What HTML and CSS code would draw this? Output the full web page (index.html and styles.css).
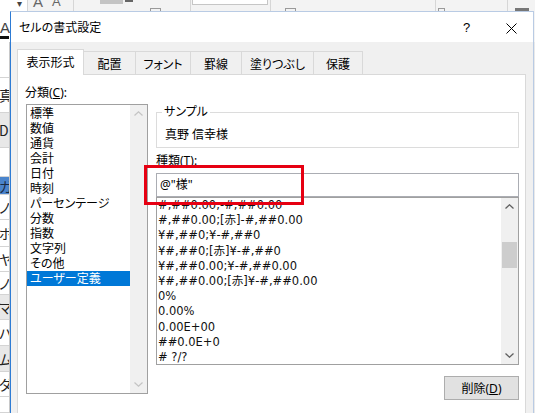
FILE: index.html
```html
<!DOCTYPE html>
<html lang="ja">
<head>
<meta charset="utf-8">
<title>セルの書式設定</title>
<link rel="stylesheet" href="styles.css">
</head>
<body>
<div class="screen">
  <div class="ribbon">
    <div class="rb rb-1">
      <div class="rb-drop">▾</div>
      <div class="rb-fontcolor"><span class="rb-a">A</span><span class="rb-bar"></span></div>
    </div>
    <div class="rb rb-2"><span class="rb-big">A</span><span class="rb-small">A</span></div>
    <div class="rb rb-3"><span class="blk-gray"></span><span class="blk-dark"></span><span class="mini-grid g1"></span></div>
    <div class="rb rb-4"><span class="white-box"></span><span class="mini-blue"></span></div>
    <div class="rb rb-5"><span class="mini-grid g2"></span></div>
    <div class="rb rb-6"><span class="mini-grid g3"></span></div>
    <div class="rb rb-7"><span class="blk-dark2"></span></div>
  </div>
  <div class="sheet">
    <div class="cell h36"></div>
    <div class="cell h35">真</div>
    <div class="cell h35 gray">D</div>
    <div class="cell h29"></div>
    <div class="cell h18 sel">ガ</div>
    <div class="cell h25">ノ</div>
    <div class="cell h27">ボ</div>
    <div class="cell h25">ヤ</div>
    <div class="cell h23">ノ</div>
    <div class="cell h25 gray">マ</div>
    <div class="cell h26">ハ</div>
    <div class="cell h26 gray">ム</div>
    <div class="cell h25">ダ</div>
    <div class="cell h16"></div>
  </div>
  <div class="rest"></div>

  <div class="dialog">
    <div class="titlebar">
      <span class="title">セルの書式設定</span>
      <span class="cap-btn help">?</span>
      <span class="cap-btn close">
        <svg width="11" height="11" viewBox="0 0 11 11"><path d="M0.5 0.5 L10.5 10.5 M10.5 0.5 L0.5 10.5" stroke="#000" stroke-width="1" fill="none"/></svg>
      </span>
    </div>
    <div class="body">
      <div class="tabs">
        <div class="tab active w1">表示形式</div>
        <div class="tab w2">配置</div>
        <div class="tab w3">フォント</div>
        <div class="tab w4">罫線</div>
        <div class="tab w5">塗りつぶし</div>
        <div class="tab w6">保護</div>
      </div>
      <div class="panel">
        <div class="col-left">
          <div class="label">分類(<u>C</u>):</div>
          <div class="listbox cat">
            <ul class="items">
              <li>標準</li>
              <li>数値</li>
              <li>通貨</li>
              <li>会計</li>
              <li>日付</li>
              <li>時刻</li>
              <li>パーセンテージ</li>
              <li>分数</li>
              <li>指数</li>
              <li>文字列</li>
              <li>その他</li>
              <li class="selected">ユーザー定義</li>
            </ul>
            <div class="vscroll disabled">
              <span class="arrow"><svg width="9" height="5" viewBox="0 0 9 5"><path d="M0.5 4.5 L4.5 0.8 L8.5 4.5" stroke="currentColor" stroke-width="1.2" fill="none"/></svg></span>
              <span class="track"></span>
              <span class="arrow"><svg width="9" height="5" viewBox="0 0 9 5"><path d="M0.5 0.5 L4.5 4.2 L8.5 0.5" stroke="currentColor" stroke-width="1.2" fill="none"/></svg></span>
            </div>
          </div>
        </div>
        <div class="col-right">
          <fieldset class="sample">
            <legend>サンプル</legend>
            <div class="sample-text">真野 信幸様</div>
          </fieldset>
          <div class="label type-label">種類(<u>T</u>):</div>
          <div class="input">@"様"</div>
          <div class="listbox fmt">
            <ul class="items">
              <li>#,##0.00;-#,##0.00</li>
              <li>#,##0.00;[赤]-#,##0.00</li>
              <li>¥#,##0;¥-#,##0</li>
              <li>¥#,##0;[赤]¥-#,##0</li>
              <li>¥#,##0.00;¥-#,##0.00</li>
              <li>¥#,##0.00;[赤]¥-#,##0.00</li>
              <li>0%</li>
              <li>0.00%</li>
              <li>0.00E+00</li>
              <li>##0.0E+0</li>
              <li># ?/?</li>
            </ul>
            <div class="vscroll">
              <span class="arrow"><svg width="9" height="5" viewBox="0 0 9 5"><path d="M0.5 4.5 L4.5 0.8 L8.5 4.5" stroke="currentColor" stroke-width="1.3" fill="none"/></svg></span>
              <span class="track"><span class="thumb"></span></span>
              <span class="arrow"><svg width="9" height="5" viewBox="0 0 9 5"><path d="M0.5 0.5 L4.5 4.2 L8.5 0.5" stroke="currentColor" stroke-width="1.3" fill="none"/></svg></span>
            </div>
          </div>
          <div class="btn-row"><button class="btn">削除(<u>D</u>)</button></div>
        </div>
        <div class="highlight"></div>
      </div>
    </div>
  </div>
</div>
</body>
</html>
```

FILE: styles.css
```css
* { box-sizing: border-box; margin: 0; padding: 0; }
html, body { width: 535px; height: 413px; overflow: hidden; }
body {
  font-family: "Noto Sans", "Noto Sans CJK JP", sans-serif;
  font-size: 12px;
  color: #000;
  background: #fff;
  font-feature-settings: "palt";
}
.screen {
  position: relative;
  width: 535px;
  height: 413px;
  display: grid;
  grid-template-rows: 42px 1fr;
  grid-template-columns: 10px 1fr;
  overflow: hidden;
  background: #e9e9e9;
}

/* ribbon strip behind */
.ribbon {
  grid-column: 1 / 3;
  display: flex;
  background: #f3f3f3;
  height: 42px;
  overflow: hidden;
}
.rb { height: 42px; border-right: 1px solid #d6d6d6; position: relative; display: flex; }
.rb-1 { width: 28px; flex-direction: column; background: #fff; }
.rb-drop { height: 11px; line-height: 6px; font-size: 10px; color: #444; text-align: right; padding-right: 5px; }
.rb-fontcolor { display: flex; flex-direction: column; margin-top: 10px; width: 9px; }
.rb-a { font-size: 15px; line-height: 14px; color: #444; font-family: "Liberation Sans", sans-serif; }
.rb-bar { height: 3px; background: #111; margin-top: 1px; }
.rb-2 { width: 46px; align-items: flex-start; padding-left: 5px; gap: 9px; }
.rb-big { font-family: "Liberation Sans", sans-serif; font-size: 15px; color: #666; margin-top: -8px; line-height: 20px; }
.rb-small { font-family: "Liberation Sans", sans-serif; font-size: 13px; color: #666; margin-top: -8px; line-height: 20px; }
.rb-3 { width: 117px; border-right: 1px solid #d6d6d6; align-items: flex-start; padding-left: 26px; }
.blk-gray { width: 23px; height: 4px; background: #c4c4c4; }
.blk-dark { width: 8px; height: 2px; background: #666; margin-left: 2px; }
.mini-grid { width: 11px; height: 4px; border: 1px solid #9a9a9a; border-bottom: none; margin-top: 8px; }
.g1 { margin-left: 17px; }
.rb-4 { width: 80px; align-items: flex-start; padding-left: 1px; flex-wrap: wrap; position: relative; }
.white-box { width: 76px; height: 5px; background: #fff; border: 1px solid #c6c6c6; border-top: none; }
.mini-blue { width: 8px; height: 3px; background: #5a8fd0; margin-left: 6px; margin-top: 3px; }
.rb-5 { width: 165px; align-items: flex-start; padding-left: 14px; }
.rb-6 { width: 72px; align-items: flex-start; padding-left: 2px; }
.g3 { width: 7px; }
.rb-7 { flex: 1; border-right: none; align-items: flex-start; padding-left: 7px; }
.blk-dark2 { width: 14px; height: 4px; background: #777; margin-top: 8px; }

/* sheet column behind */
.sheet {
  grid-column: 1;
  grid-row: 2;
  display: flex;
  flex-direction: column;
  background: #fff;
  border-right: 1px solid #c8c8c8;
  overflow: hidden;
}
.cell {
  border-bottom: 1px solid #d4d4d4;
  font-family: "Noto Sans CJK JP", sans-serif;
  font-size: 14px;
  white-space: nowrap;
  overflow: hidden;
  display: flex;
  align-items: center;
  text-indent: -1px;
  color: #222;
}
.cell.gray { background: #e8e8e8; }
.cell.sel { background: #4a84cc; color: #1a2a44; }
.h16 { height: 16px; } .h18 { height: 18px; } .h23 { height: 23px; } .h25 { height: 25px; }
.h26 { height: 26px; } .h27 { height: 27px; } .h29 { height: 29px; } .h35 { height: 35px; } .h36 { height: 36px; }
.rest { grid-column: 2; grid-row: 2; background: #e9e9e9; }

/* dialog window */
.dialog {
  position: absolute;
  left: 10px;
  top: 11px;
  width: 524px;
  height: 420px;
  background: #f0f0f0;
  border: 1px solid #b9cbe4;
  border-left-color: #2d7bd4;
  display: flex;
  flex-direction: column;
}
.titlebar {
  height: 30px;
  background: #fff;
  display: flex;
  align-items: center;
  padding-left: 8px;
}
.title { flex: 1; font-size: 12px; }
.cap-btn { height: 30px; display: flex; align-items: center; justify-content: center; }
.help { width: 45px; font-family: "Liberation Sans", sans-serif; font-size: 13px; padding-top: 1px; }
.close { width: 44px; padding-top: 2px; }

.body {
  flex: 1;
  display: flex;
  flex-direction: column;
  padding: 7px 7px 0 6px;
}
.tabs { display: flex; align-items: flex-end; height: 25px; position: relative; z-index: 2; }
.tab {
  height: 23px;
  border: 1px solid #d9d9d9;
  border-bottom: none;
  background: #f0f0f0;
  margin-left: -1px;
  display: flex;
  align-items: center;
  justify-content: center;
  padding-top: 1px;
}
.tab.active { height: 26px; margin-bottom: -1px; background: #fff; margin-left: 0; z-index: 3; padding-bottom: 2px; }
.w1 { width: 67px; } .w2 { width: 53px; } .w3 { width: 56px; } .w4 { width: 52px; } .w5 { width: 73px; } .w6 { width: 50px; }

.panel {
  flex: 1;
  background: #fff;
  border: 1px solid #d9d9d9;
  padding: 9px 6px 0 7px;
  display: grid;
  grid-template-columns: 123px 363px;
  column-gap: 8px;
  align-items: start;
  position: relative;
}
.label { line-height: 17px; height: 17px; }
.col-left { display: flex; flex-direction: column; }
.col-left .label { margin-bottom: 3px; }

.listbox { border: 1px solid #a0a0a0; background: #fff; display: flex; overflow: hidden; }
.items { list-style: none; flex: 1; overflow: hidden; }
.cat { width: 122px; height: 290px; margin-left: 1px; }
.cat .items { padding-top: 1px; }
.cat li { height: 15px; line-height: 15px; padding-left: 3px; white-space: nowrap; }
.cat li.selected { background: #0078d7; color: #fff; }

.vscroll { width: 17px; background: #f0f0f0; display: flex; flex-direction: column; color: #606060; }
.vscroll.disabled { color: #c4c4c4; }
.arrow { height: 17px; display: flex; align-items: center; justify-content: center; }
.track { flex: 1; display: flex; flex-direction: column; }
.thumb { margin: 27px 1px 0 1px; height: 26px; background: #cdcdcd; }

.col-right { display: flex; flex-direction: column; }
.sample {
  margin-top: 20px;
  height: 44px;
  border: 1px solid #dcdcdc;
  padding: 0 4px;
}
.sample legend { padding: 0 2px; line-height: 16px; margin-left: 1px; }
.sample-text { line-height: 16px; margin-top: 7px; padding-left: 4px; }
.type-label { margin-top: 5px; line-height: 16px; height: 16px; }
.input {
  margin-top: 4px;
  height: 24px;
  border: 1px solid #abadb3;
  line-height: 22px;
  padding-left: 3px;
}
.fmt { height: 168px; }
.fmt li {
  height: 15.2px;
  line-height: 15.2px;
  padding-left: 1px;
  white-space: nowrap;
  font-family: "DejaVu Sans", "Noto Sans CJK JP", sans-serif;
  font-size: 11.5px;
  color: #111;
}
.fmt .items { padding-top: 0; }

.btn-row { display: flex; justify-content: flex-end; margin-top: 11px; }
.btn {
  width: 75px;
  height: 24px;
  background: #e1e1e1;
  border: 1px solid #adadad;
  font: inherit;
  font-feature-settings: "palt";
  color: #000;
}

.highlight {
  position: absolute;
  left: 126px;
  top: 90px;
  width: 160px;
  height: 40px;
  border: 3px solid #e60012;
  z-index: 5;
}
```
